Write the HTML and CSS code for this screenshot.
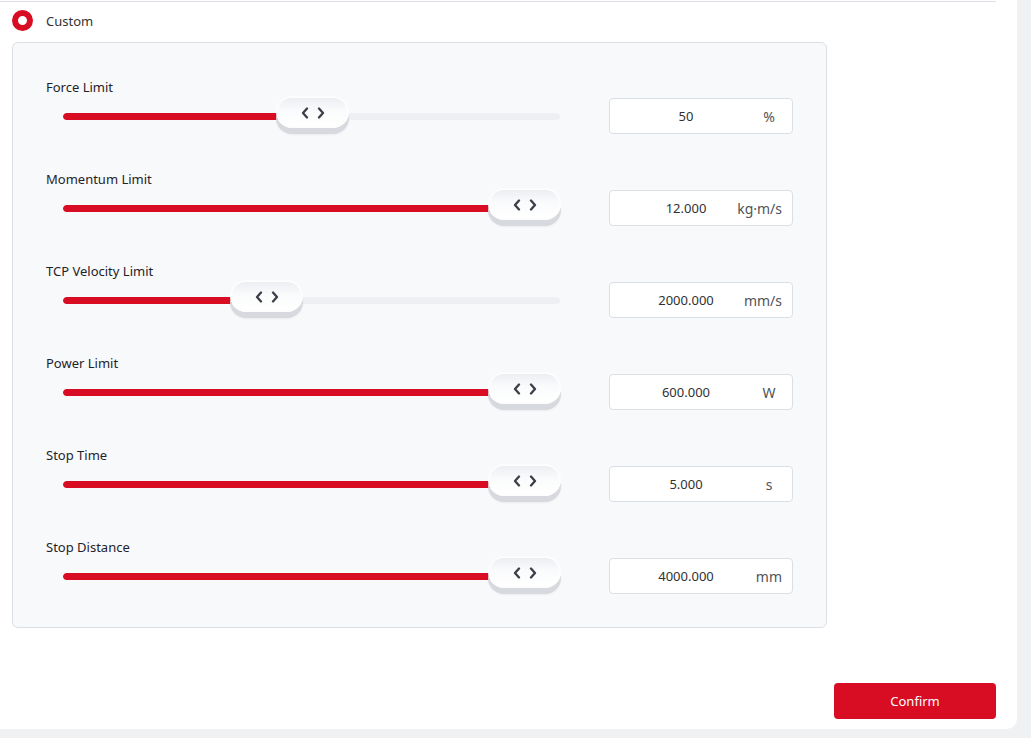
FILE: index.html
```html
<!DOCTYPE html>
<html>
<head>
<meta charset="utf-8">
<link rel="stylesheet" href="styles.css">
</head>
<body>
<div class="panel">
  <div class="topline"></div>
  <div class="radio-row">
    <span class="radio"></span>
    <span class="radio-label">Custom</span>
  </div>
  <div class="card">
    <div class="row">
      <div class="label">Force Limit</div>
      <div class="control">
        <div class="slider">
          <div class="track"><div class="fill" style="width:249px"></div></div>
          <div class="thumb" style="left:213px"><svg class="chev" viewBox="0 0 24 12" width="24" height="12"><polyline points="6,1.5 2,6 6,10.5"/><polyline points="18,1.5 22,6 18,10.5"/></svg></div>
        </div>
        <div class="input"><span class="value">50</span><span class="unit">%</span></div>
      </div>
    </div>
    <div class="row">
      <div class="label">Momentum Limit</div>
      <div class="control">
        <div class="slider">
          <div class="track"><div class="fill" style="width:461px"></div></div>
          <div class="thumb" style="left:425px"><svg class="chev" viewBox="0 0 24 12" width="24" height="12"><polyline points="6,1.5 2,6 6,10.5"/><polyline points="18,1.5 22,6 18,10.5"/></svg></div>
        </div>
        <div class="input"><span class="value">12.000</span><span class="unit">kg·m/s</span></div>
      </div>
    </div>
    <div class="row">
      <div class="label">TCP Velocity Limit</div>
      <div class="control">
        <div class="slider">
          <div class="track"><div class="fill" style="width:203px"></div></div>
          <div class="thumb" style="left:167px"><svg class="chev" viewBox="0 0 24 12" width="24" height="12"><polyline points="6,1.5 2,6 6,10.5"/><polyline points="18,1.5 22,6 18,10.5"/></svg></div>
        </div>
        <div class="input"><span class="value">2000.000</span><span class="unit">mm/s</span></div>
      </div>
    </div>
    <div class="row">
      <div class="label">Power Limit</div>
      <div class="control">
        <div class="slider">
          <div class="track"><div class="fill" style="width:461px"></div></div>
          <div class="thumb" style="left:425px"><svg class="chev" viewBox="0 0 24 12" width="24" height="12"><polyline points="6,1.5 2,6 6,10.5"/><polyline points="18,1.5 22,6 18,10.5"/></svg></div>
        </div>
        <div class="input"><span class="value">600.000</span><span class="unit">W</span></div>
      </div>
    </div>
    <div class="row">
      <div class="label">Stop Time</div>
      <div class="control">
        <div class="slider">
          <div class="track"><div class="fill" style="width:461px"></div></div>
          <div class="thumb" style="left:425px"><svg class="chev" viewBox="0 0 24 12" width="24" height="12"><polyline points="6,1.5 2,6 6,10.5"/><polyline points="18,1.5 22,6 18,10.5"/></svg></div>
        </div>
        <div class="input"><span class="value">5.000</span><span class="unit">s</span></div>
      </div>
    </div>
    <div class="row">
      <div class="label">Stop Distance</div>
      <div class="control">
        <div class="slider">
          <div class="track"><div class="fill" style="width:461px"></div></div>
          <div class="thumb" style="left:425px"><svg class="chev" viewBox="0 0 24 12" width="24" height="12"><polyline points="6,1.5 2,6 6,10.5"/><polyline points="18,1.5 22,6 18,10.5"/></svg></div>
        </div>
        <div class="input"><span class="value">4000.000</span><span class="unit">mm</span></div>
      </div>
    </div>
  </div>
  <div class="footer">
    <button class="confirm">Confirm</button>
  </div>
</div>
</body>
</html>
```
FILE: styles.css
```css
* { box-sizing: border-box; }
html, body { margin: 0; padding: 0; }
body {
  background: #f0f1f3;
  font-family: "Noto Sans", "Liberation Sans", sans-serif;
  font-size: 13px;
  color: #1f2329;
  width: 1031px;
  height: 738px;
  overflow: hidden;
}
.panel {
  width: 1017px;
  height: 729px;
  background: #fff;
  border-bottom-right-radius: 10px;
  padding: 1px 21px 0 0;
  display: flex;
  flex-direction: column;
}
.topline {
  height: 1px;
  background: #dcdfe6;
  width: 996px;
}
.radio-row {
  display: flex;
  align-items: center;
  height: 38px;
  padding-left: 12px;
}
.radio {
  width: 21px;
  height: 21px;
  margin-top: -1px;
  border-radius: 50%;
  border: 6px solid #d80c22;
  background: #fff;
  flex-shrink: 0;
}
.radio-label {
  margin-left: 13px;
  color: #333;
  line-height: 18px;
}
.card {
  margin-left: 12px;
  margin-top: 2px;
  width: 815px;
  height: 586px;
  border: 1px solid #dcdfe6;
  border-radius: 6px;
  background: #f8f9fb;
  padding: 35px 0 0 33px;
  display: flex;
  flex-direction: column;
  gap: 36px;
}
.row {
  display: flex;
  flex-direction: column;
  gap: 2px;
}
.label {
  line-height: 18px;
  height: 18px;
  color: #1f2329;
}
.control {
  display: flex;
  align-items: center;
  height: 36px;
  padding-left: 17px;
}
.slider {
  position: relative;
  width: 497px;
  height: 36px;
  display: flex;
  align-items: center;
  margin-right: 49px;
  flex-shrink: 0;
}
.track {
  width: 100%;
  height: 7px;
  border-radius: 4px;
  background: #eeeff2;
  overflow: hidden;
}
.fill {
  height: 100%;
  background: #d80c22;
  border-radius: 4px;
}
.thumb {
  position: absolute;
  top: -2px;
  width: 73px;
  height: 32px;
  border-radius: 16px;
  background: linear-gradient(#eceef3, #fafbfc 45%, #ffffff);
  border: 2px solid #fdfdfe;
  box-shadow: 0 6px 0 #d8d9df, 0 7px 2px rgba(0,0,0,0.05);
  display: flex;
  align-items: center;
  justify-content: center;
  padding-top: 2px;
}
.chev {
  display: block;
  fill: none;
  stroke: #3a3e48;
  stroke-width: 2.3;
  stroke-linecap: round;
  stroke-linejoin: round;
}
.input {
  width: 184px;
  height: 36px;
  border: 1px solid #dcdfe6;
  border-radius: 4px;
  background: #fff;
  display: grid;
  grid-template-columns: 1fr;
  align-items: center;
}
.value, .unit {
  grid-row: 1;
  grid-column: 1;
}
.value {
  justify-self: start;
  width: 152px;
  text-align: center;
  color: #303133;
}
.unit {
  justify-self: end;
  min-width: 26px;
  margin-right: 10px;
  text-align: center;
  color: #505359;
  font-size: 14px;
}
.footer {
  display: flex;
  justify-content: flex-end;
  margin-top: auto;
  margin-bottom: 10px;
}
.confirm {
  width: 162px;
  height: 36px;
  border: none;
  border-radius: 4px;
  background: #d80c22;
  color: #fff;
  font-family: "Noto Sans", "Liberation Sans", sans-serif;
  font-size: 13px;
}
```
